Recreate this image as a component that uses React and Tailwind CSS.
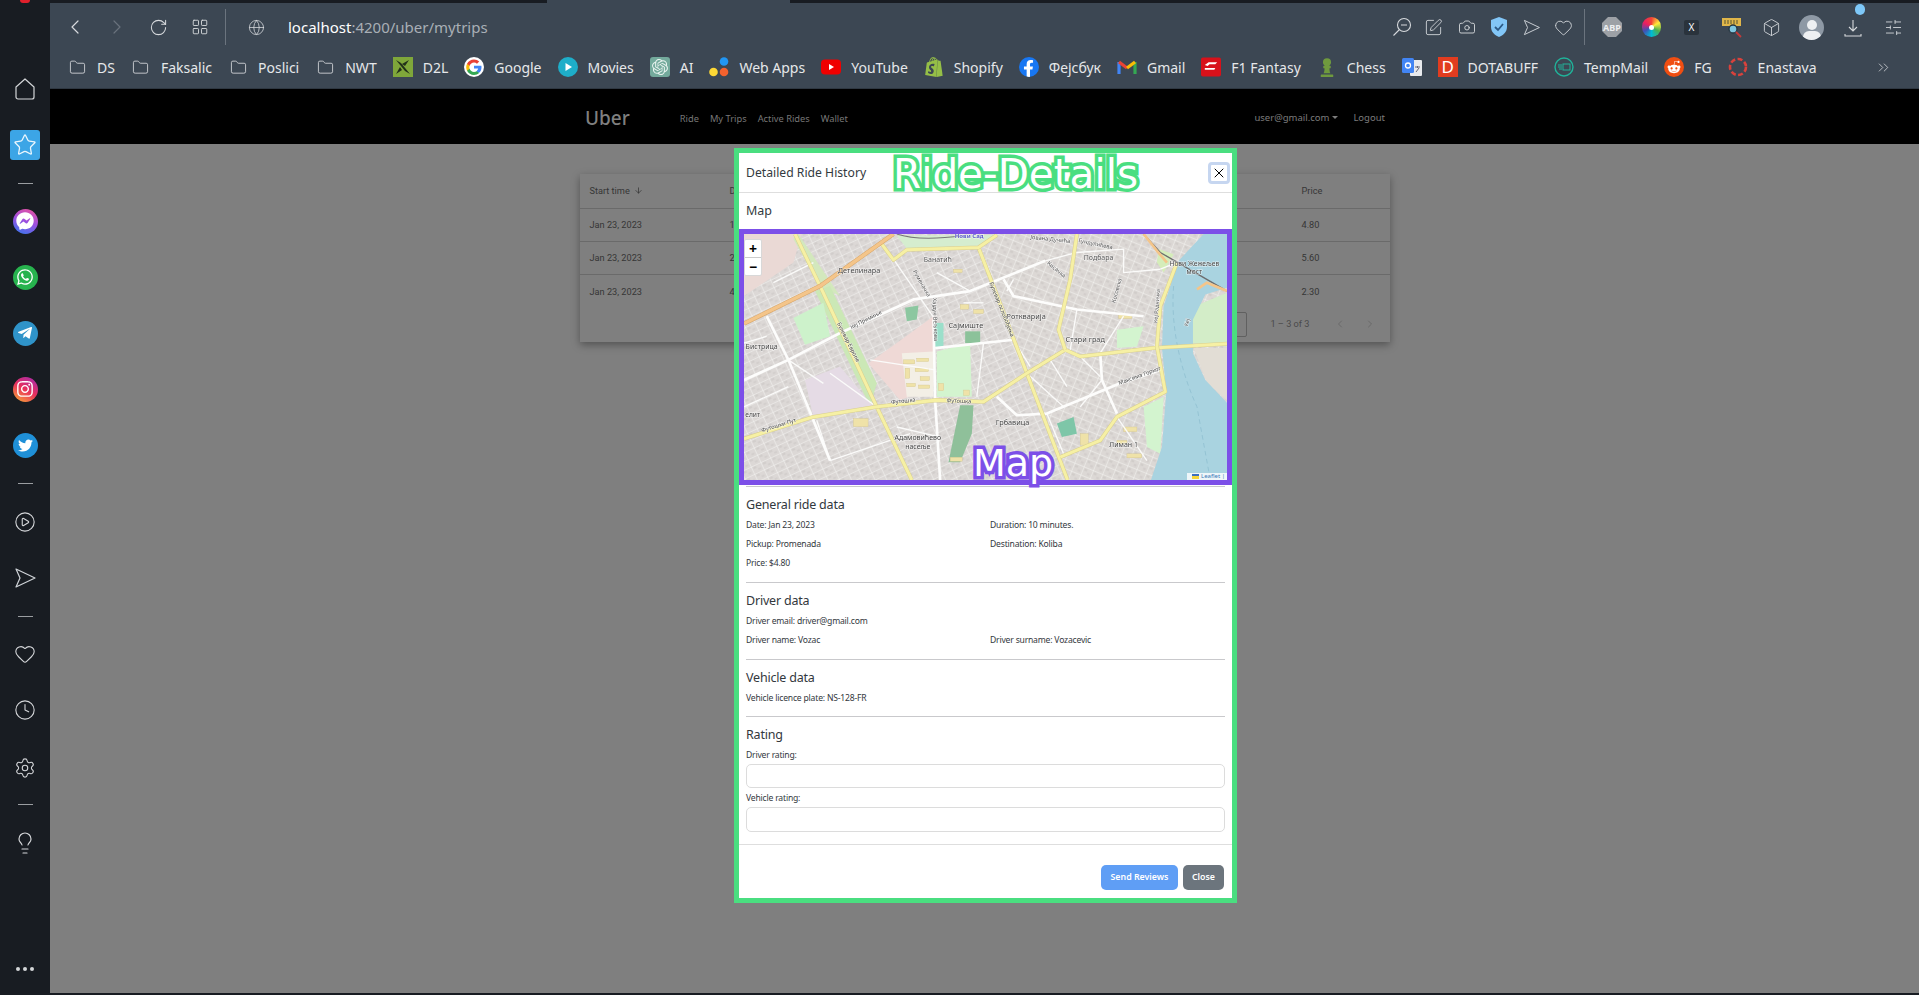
import {
  ChevronLeft, ChevronRight, RotateCw, LayoutGrid, Globe, Folder, Camera, Heart, Box,
  SlidersHorizontal, ChevronsRight, Star, CirclePlay, Clock, Settings, Lightbulb, X, ArrowDown, SquarePen,
} from "lucide-react";
import { FaWhatsapp, FaTelegramPlane, FaTwitter, FaFacebookF, FaFacebookMessenger, FaInstagram, FaChessPawn, FaRedditAlien } from "react-icons/fa";
import { SiOpenai, SiShopify } from "react-icons/si";

const SendIcon = ({ size = 20 }) => (
  <svg width={size} height={size} viewBox="0 0 24 24" fill="none" stroke="#cfd3d8" strokeWidth="1.2" strokeLinejoin="round">
    <path d="M3 3 L22 12 L3 21 L7 12 Z" />
  </svg>
);

const GoogleIcon = () => (
  <svg width="20" height="20" viewBox="0 0 48 48">
    <circle cx="24" cy="24" r="24" fill="#fff" />
    <path fill="#4285F4" d="M42 24.5c0-1.3-.1-2.5-.3-3.7H24v7h10.1c-.4 2.3-1.8 4.3-3.7 5.6v4.6h6C39.900 34.800 42 30.100 42 24.500z" />
    <path fill="#34A853" d="M24 43c5 0 9.300-1.700 12.400-4.500l-6-4.600c-1.700 1.100-3.800 1.800-6.400 1.800-4.900 0-9-3.300-10.500-7.700H7.300v4.800C10.400 38.800 16.700 43 24 43z" />
    <path fill="#FBBC05" d="M13.500 28c-.4-1.100-.6-2.400-.6-3.600s.2-2.500.6-3.600v-4.800H7.300C6 18.500 5.300 21.200 5.300 24.400s.7 5.900 2 8.400l6.200-4.800z" />
    <path fill="#EA4335" d="M24 13.100c2.800 0 5.200 1 7.200 2.800l5.300-5.300C33.300 7.600 29 5.800 24 5.800c-7.300 0-13.600 4.200-16.700 10.400l6.200 4.800c1.500-4.500 5.600-7.900 10.500-7.900z" />
  </svg>
);

const folder = <Folder size={17} strokeWidth={1.1} color="#e6e8ea" />;

const bookmarks = [
  { icon: folder, label: "DS" },
  { icon: folder, label: "Faksalic" },
  { icon: folder, label: "Poslici" },
  { icon: folder, label: "NWT" },
  {
    label: "D2L",
    icon: (
      <svg width="20" height="20" viewBox="0 0 20 20">
        <rect width="20" height="20" fill="#7fa73a" />
        <path d="M3 3 L8 6 L17 17 L12 14 Z M16 3 L12 9 L9 7 Z M3 17 L7 10 L9 13 Z" fill="#22301a" />
      </svg>
    ),
  },
  { label: "Google", icon: <GoogleIcon /> },
  {
    label: "Movies",
    icon: (
      <svg width="20" height="20" viewBox="0 0 20 20">
        <circle cx="10" cy="10" r="10" fill="#1eaec9" />
        <path d="M7.5 6 L14 10 L7.5 14 Z" fill="#fff" />
      </svg>
    ),
  },
  {
    label: "AI",
    icon: (
      <span className="w-5 h-5 rounded-[3px] bg-[#74aa9c] flex items-center justify-center">
        <SiOpenai size={16} color="#e8f3ef" />
      </span>
    ),
  },
  {
    label: "Web Apps",
    icon: (
      <svg width="20" height="20" viewBox="0 0 20 20">
        <circle cx="15" cy="4.5" r="4.3" fill="#2196f3" />
        <circle cx="4.5" cy="15" r="4.3" fill="#fdd835" />
        <circle cx="15" cy="15" r="4.3" fill="#f4622e" />
      </svg>
    ),
  },
  {
    label: "YouTube",
    icon: (
      <svg width="20" height="20" viewBox="0 0 20 20">
        <rect y="2.5" width="20" height="15" rx="4" fill="#f00000" />
        <path d="M8 7 L13 10 L8 13 Z" fill="#fff" />
      </svg>
    ),
  },
  { label: "Shopify", icon: <SiShopify size={20} color="#95bf47" /> },
  {
    label: "Фејсбук",
    icon: (
      <span className="w-5 h-5 rounded-full bg-[#1877f2] flex items-end justify-center overflow-hidden">
        <FaFacebookF size={17} color="#fff" />
      </span>
    ),
  },
  {
    label: "Gmail",
    icon: (
      <svg width="20" height="20" viewBox="0 0 20 20" fill="none" strokeWidth="3.2">
        <path d="M2 17 V5" stroke="#4285f4" />
        <path d="M18 17 V5" stroke="#34a853" />
        <path d="M2 5 L10 11" stroke="#ea4335" />
        <path d="M10 11 L18 5" stroke="#fbbc05" />
      </svg>
    ),
  },
  {
    label: "F1 Fantasy",
    icon: (
      <svg width="21" height="20" viewBox="0 0 21 20">
        <rect width="21" height="20" rx="2" fill="#d8111a" />
        <path d="M4 8 L8 5 H17 L15 7 H9 L7 9 Z M4 11 H15 L14 13 H4 Z" fill="#fff" />
      </svg>
    ),
  },
  { label: "Chess", icon: <FaChessPawn size={20} color="#6f9a3e" /> },
  {
    label: "",
    icon: (
      <svg width="20" height="20" viewBox="0 0 20 20">
        <rect x="8" y="3" width="12" height="16" rx="1" fill="#e8eaed" />
        <rect y="1" width="12" height="15" rx="1.5" fill="#4285f4" />
        <circle cx="6" cy="8.5" r="2.5" fill="none" stroke="#fff" strokeWidth="1.3" />
        <path d="M13 10 H18 M15.5 9 V11 M14 15 L17 11" stroke="#667" strokeWidth="1" />
      </svg>
    ),
  },
  {
    label: "DOTABUFF",
    icon: <span className="w-5 h-5 bg-[#e23c1f] text-white text-[17px] leading-5 text-center">D</span>,
  },
  {
    label: "TempMail",
    icon: (
      <svg width="20" height="20" viewBox="0 0 20 20" fill="none" stroke="#20b39a" strokeWidth="1.4">
        <circle cx="10" cy="10" r="9" />
        <rect x="9" y="7" width="7" height="6" strokeWidth="1" />
        <path d="M4 8 H8 M4 10 H8 M5 12 H8" strokeWidth="1" />
      </svg>
    ),
  },
  {
    label: "FG",
    icon: (
      <span className="w-5 h-5 rounded-full bg-[#f04e12] flex items-center justify-center">
        <FaRedditAlien size={14} color="#fff" />
      </span>
    ),
  },
  {
    label: "Enastava",
    icon: (
      <svg width="20" height="20" viewBox="0 0 20 20" fill="none">
        <circle cx="10" cy="10" r="8" stroke="#d9423c" strokeWidth="2.6" strokeDasharray="5 2.4" />
      </svg>
    ),
  },
];

const SideSep = ({ h }) => (
  <div className={`w-full flex items-center justify-center ${h}`}>
    <div className="w-[15px] h-px bg-[#9a9da1]" />
  </div>
);

const SideCell = ({ children }) => <div className="h-14 w-full flex items-center justify-center shrink-0">{children}</div>;

const Round = ({ cls, children }) => <span className={`w-[25px] h-[25px] rounded-full flex items-center justify-center ${cls}`}>{children}</span>;

function Sidebar() {
  const c = "#d4d6d9";
  return (
    <aside className="w-[50px] shrink-0 bg-[#181c22] flex flex-col items-center pt-[61px] relative">
      <div className="absolute top-0 left-[20px] w-[10px] h-[3px] rounded-b-full bg-[#e0202c]" />
      <SideCell>
        <svg width="22" height="24" viewBox="0 0 22 24" fill="none" stroke={c} strokeWidth="1.2" strokeLinejoin="round">
          <path d="M11 2 L20 10 V20 A2 2 0 0 1 18 22 H4 A2 2 0 0 1 2 20 V10 Z" />
        </svg>
      </SideCell>
      <SideCell>
        <span className="w-[30px] h-[30px] rounded-[3px] bg-[#3ca5e6] flex items-center justify-center">
          <Star size={24} strokeWidth={1.3} color="#eaf6fd" />
        </span>
      </SideCell>
      <SideSep h="h-5" />
      <SideCell><Round cls="bg-[linear-gradient(200deg,#f0529a,#9a4fe0_50%,#2f7bf0)]"><FaFacebookMessenger size={18} color="#fff" /></Round></SideCell>
      <SideCell><Round cls="bg-[#27b34e]"><FaWhatsapp size={18} color="#fff" /></Round></SideCell>
      <SideCell><Round cls="bg-[#2f93c9]"><FaTelegramPlane size={16} color="#fff" /></Round></SideCell>
      <SideCell><Round cls="bg-[linear-gradient(30deg,#f9b233,#e8305c_50%,#a12bb5)]"><FaInstagram size={18} color="#fff" /></Round></SideCell>
      <SideCell><Round cls="bg-[#1f90d8]"><FaTwitter size={15} color="#fff" /></Round></SideCell>
      <SideSep h="h-[21px]" />
      <SideCell><CirclePlay size={22} strokeWidth={1.2} color={c} /></SideCell>
      <SideCell><SendIcon size={24} /></SideCell>
      <SideSep h="h-5" />
      <SideCell><Heart size={22} strokeWidth={1.2} color={c} /></SideCell>
      <SideCell><Clock size={22} strokeWidth={1.2} color={c} /></SideCell>
      <SideCell><Settings size={22} strokeWidth={1.2} color={c} className="mt-[3px]" /></SideCell>
      <SideSep h="h-[21px]" />
      <SideCell><Lightbulb size={24} strokeWidth={1.2} color={c} /></SideCell>
      <div className="mt-auto mb-[24px] flex gap-[3px]">
        <span className="w-1 h-1 rounded-full bg-[#d4d6d9]" />
        <span className="w-1 h-1 rounded-full bg-[#d4d6d9]" />
        <span className="w-1 h-1 rounded-full bg-[#d4d6d9]" />
      </div>
    </aside>
  );
}

function Toolbar() {
  const c = "#d7dadd";
  return (
    <>
      <div className="h-[3px] bg-[#181c22] flex">
        <div className="ml-[497px] w-[243px] bg-[#3c4753]" />
      </div>
      <div className="h-[48px] bg-[#3c4753] flex items-center pl-[13px]">
        <ChevronLeft size={24} strokeWidth={1.2} color={c} />
        <ChevronRight size={24} strokeWidth={1.2} color="#69727c" className="ml-[18px]" />
        <RotateCw size={19} strokeWidth={1.3} color={c} className="ml-[20px]" />
        <LayoutGrid size={18} strokeWidth={1.2} color={c} className="ml-[23px]" />
        <div className="ml-[16px] w-px h-[36px] bg-[#6b747e]" />
        <Globe size={17} strokeWidth={1.1} color={c} className="ml-[22px]" />
        <div className="ml-[23px] text-[15px] text-[#a9afb6]">
          <span className="text-white">localhost</span>:4200/uber/mytrips
        </div>
        <div className="ml-auto flex items-center">
          <svg width="20" height="20" viewBox="0 0 20 20" fill="none" stroke={c} strokeWidth="1.1">
            <circle cx="12" cy="8" r="6.5" />
            <path d="M7.5 12.5 L1.5 18.5 M9 8 H15" />
          </svg>
          <SquarePen size={19} strokeWidth={1.1} color={c} className="ml-[12px]" />
          <Camera size={18} strokeWidth={1.2} color={c} className="ml-[15px]" />
          <svg width="18" height="20" viewBox="0 0 18 20" className="ml-[14px]">
            <path d="M9 0 L17 3 V10 C17 15 13 18.5 9 20 C5 18.5 1 15 1 10 V3 Z" fill="#82c6f7" />
            <path d="M5 10 L8 13 L13 7" fill="none" stroke="#2c5a86" strokeWidth="1.8" />
          </svg>
          <span className="ml-[14px]"><SendIcon size={19} /></span>
          <Heart size={19} strokeWidth={1.1} color={c} className="ml-[13px]" />
          <div className="ml-[11px] w-px h-[36px] bg-[#6b747e]" />
          <svg width="20" height="20" viewBox="0 0 20 20" className="ml-[17px]">
            <path d="M6 0 H14 L20 6 V14 L14 20 H6 L0 14 V6 Z" fill="#9da1a6" />
            <text x="10" y="13.5" textAnchor="middle" fontSize="9" fontWeight="700" fill="#eceef0">ABP</text>
          </svg>
          <span className="ml-[20px] w-[19px] h-5 rounded-full bg-[conic-gradient(#f44336,#ffeb3b,#4caf50,#00bcd4,#3f51b5,#e91e63,#f44336)] flex items-center justify-center">
            <span className="w-[5px] h-[5px] rounded-full bg-white" />
          </span>
          <span className="ml-[23px] w-[15px] h-[15px] rounded-[2px] bg-[#2a333c] text-[10px] leading-[15px] text-white text-center">X</span>
          <svg width="21" height="21" viewBox="0 0 21 21" className="ml-[23px]">
            <rect x="0" y="1" width="19" height="8" fill="#e0b64a" />
            <path d="M2 4 H17 M2 6 H17" stroke="#553" strokeWidth="1" strokeDasharray="2 1" />
            <circle cx="11" cy="12" r="4" fill="#7dc6e0" stroke="#25343f" strokeWidth="1.3" />
            <path d="M14 15 L19 20" stroke="#c23a3a" strokeWidth="1.8" />
          </svg>
          <Box size={19} strokeWidth={1.1} color={c} className="ml-[19px]" />
          <span className="ml-[18px] w-[25px] h-[25px] rounded-full bg-[#8e99a5] overflow-hidden relative flex justify-center">
            <span className="absolute top-[5px] w-[10px] h-[10px] rounded-full bg-[#eef0f2]" />
            <span className="absolute top-[16px] w-[18px] h-[12px] rounded-full bg-[#eef0f2]" />
          </span>
          <span className="ml-[20px] relative">
            <svg width="18" height="20" viewBox="0 0 18 20" fill="none" stroke={c} strokeWidth="1.1" className="mt-[2px]">
              <path d="M9 2 V13 M5 9 L9 13 L13 9 M1 16 V18 H17 V16" />
            </svg>
            <span className="absolute top-[-12px] left-[11px] w-[10px] h-[11px] rounded-full bg-[#7ec8f8]" />
          </span>
          <SlidersHorizontal size={19} strokeWidth={1.1} color={c} className="ml-[22px] mr-[16px]" />
        </div>
      </div>
      <div className="h-[38px] bg-[#3c4753] border-b border-[#2f3842] flex items-center pl-[17px] pb-[5px] text-[14px] text-[#e6e8ea] relative">
        <div className="flex items-center gap-[16px]">
          {bookmarks.map((b, i) => (
            <div key={i} className="flex items-center gap-[10px]">
              <span className="w-5 h-5 flex items-center justify-center">{b.icon}</span>
              {b.label && <span className="whitespace-nowrap">{b.label}</span>}
            </div>
          ))}
        </div>
        <ChevronsRight size={17} strokeWidth={1.1} color={c} className="absolute right-[27px] top-[8px]" />
      </div>
    </>
  );
}

function Navbar() {
  return (
    <nav className="h-[55px] bg-black flex items-center pt-[4px] text-[9.5px] text-[#7c7c7c] shrink-0">
      <span className="ml-[535px] text-[19px] font-medium text-[#7f7f7f]">Uber</span>
      <div className="ml-[50px] flex gap-[11px] text-[#777] text-[9.3px]">
        <span>Ride</span>
        <span>My Trips</span>
        <span>Active Rides</span>
        <span>Wallet</span>
      </div>
      <span className="ml-auto">user@gmail.com</span>
      <span className="ml-[3px] mb-[2px] w-0 h-0 border-x-[3px] border-x-transparent border-t-[3px] border-t-[#7c7c7c]" />
      <span className="ml-[15px] mr-[534px]">Logout</span>
    </nav>
  );
}

const rows = [
  ["Jan 23, 2023", "10", "4.80"],
  ["Jan 23, 2023", "20", "5.60"],
  ["Jan 23, 2023", "40", "2.30"],
];

function TripsTable() {
  return (
    <div className="mt-[30px] mx-auto w-[810px] h-[168px] bg-[#7f7f7f] shadow-[0_3px_8px_rgba(0,0,0,0.35)] font-['Roboto',sans-serif] text-[9.2px] text-[#363636]">
      <div className="h-[35px] grid grid-cols-[140px_572px_1fr] items-center pl-[10px] border-b border-[#6a6a6a]">
        <span className="flex items-center gap-[4px]">Start time <ArrowDown size={9} strokeWidth={2} /></span>
        <span>Duration</span>
        <span>Price</span>
      </div>
      {rows.map((r, i) => (
        <div key={i} className={`h-[33px] grid grid-cols-[140px_572px_1fr] items-center pl-[10px] ${i < 2 ? "border-b border-[#6a6a6a]" : ""}`}>
          <span>{r[0]}</span>
          <span>{r[1]}</span>
          <span>{r[2]}</span>
        </div>
      ))}
      <div className="flex items-center justify-end mt-[3px] h-[26px]">
        <span className="w-[40px] h-[25px] border border-[#606060] rounded-[2px]" />
        <span className="ml-[23px] text-[#4a4a4a]">1 – 3 of 3</span>
        <ChevronLeft size={12} color="#6a6a6a" className="ml-[24px]" />
        <ChevronRight size={12} color="#6a6a6a" className="ml-[18px] mr-[14px]" />
      </div>
    </div>
  );
}

const yellowRoads = [
  "M195 45 L270 200 L440 560 L545 778",
  "M745 85 L890 460 L1012 778",
  "M455 75 L490 122 L530 92 L745 85 L800 48",
  "M42 655 L250 590 L440 560 L620 540 L760 545 L890 460 L1005 390 L1050 410 L1270 385 L1490 372",
  "M1040 45 L1020 180 L985 330 L1005 390",
  "M1340 130 L1290 260 L1280 380 L1305 515 L1160 590 L1110 660 L990 710",
];

const whiteRoads = [
  "M42 480 L175 420 L330 340 L550 240 L720 215 L945 125",
  "M110 290 L175 420 L300 720",
  "M610 300 L615 540 L630 778",
  "M615 385 L850 360",
  "M820 180 L850 230 L1040 270 L1240 290",
  "M800 530 L860 585 L950 580 L1170 490 L1290 450",
  "M1110 400 L1115 480 L1160 580",
];

const thinRoads = [
  "M945 125 L1040 100 L1180 90 L1180 160 L1290 150",
  "M830 215 L850 180",
  "M260 600 L300 720",
  "M1115 480 L1050 560",
  "M890 460 L1000 560",
  "M700 250 L760 250",
  "M760 370 L740 530",
  "M615 450 L420 420",
  "M42 370 L110 350",
  "M175 420 L280 490",
  "M300 720 L540 640",
  "M1050 410 L1110 470",
  "M630 650 L500 620",
  "M950 580 L1000 700",
  "M1160 590 L1250 720",
  "M1290 150 L1340 130",
  "M1180 290 L1110 400",
  "M960 420 L1010 500",
  "M850 360 L900 440",
  "M490 120 L615 300",
  "M620 160 L720 215",
  "M440 560 L300 460",
  "M42 560 L175 500",
  "M1040 270 L1020 390",
  "M130 190 L250 130",
];

const campus = [
  [520, 420, 34, 12], [560, 415, 36, 10], [525, 445, 14, 30], [555, 445, 40, 10], [570, 470, 28, 12],
  [530, 490, 26, 10], [565, 495, 34, 10], [625, 490, 16, 22], [700, 510, 18, 16], [690, 255, 26, 14],
  [730, 270, 30, 12], [670, 150, 26, 10], [1165, 285, 40, 12], [1180, 620, 40, 14], [1160, 660, 30, 10],
  [1190, 700, 44, 12], [370, 595, 44, 24], [660, 710, 36, 12], [1050, 640, 24, 34],
];

const labels = [
  [717, 58, "Нови Сад", "#5a5ac8", 18, 0, 700],
  [623, 127, "Банатић", "#555", 21, 0],
  [387, 161, "Детелинара", "#444", 22, 0],
  [1105, 123, "Подбара", "#555", 21, 0],
  [1392, 139, "Нови Жежељев", "#444", 20, 0],
  [1392, 164, "мост", "#444", 20, 0],
  [888, 297, "Роткварија", "#444", 22, 0],
  [707, 326, "Сајмиште", "#444", 22, 0],
  [1065, 366, "Стари град", "#444", 22, 0],
  [95, 389, "Бистрица", "#444", 21, 0],
  [847, 614, "Грбавица", "#444", 22, 0],
  [563, 660, "Адамовићево", "#444", 21, 0],
  [563, 687, "насеље", "#444", 21, 0],
  [1180, 681, "Лиман 1", "#444", 21, 0],
  [68, 589, "елит", "#444", 20, 0],
  [350, 370, "Булевар Европе", "#444", 17, 63],
  [410, 305, "Кеј Примиње", "#444", 16, -27],
  [520, 548, "Футошка", "#444", 17, -6],
  [686, 548, "Футошка", "#444", 17, 3],
  [148, 620, "Футошки Пут", "#444", 17, -17],
  [810, 272, "Булевар ослобођења", "#444", 17, 68],
  [570, 195, "Руменачка", "#555", 17, 60],
  [610, 300, "Хајдук Вељкова", "#555", 17, 88],
  [1230, 472, "Максима Горког", "#444", 17, -20],
  [960, 66, "Јована Дучића", "#555", 17, 6],
  [1095, 80, "Гундулићева", "#555", 17, 12],
  [975, 155, "Кисачка", "#555", 17, 40],
  [1165, 215, "Косовска", "#555", 17, -75],
  [1285, 260, "Кеј Радничка", "#555", 16, -85],
  [1375, 310, "Кеј", "#555", 16, -75],
];

function CityMap() {
  return (
    <svg viewBox="42 45 1448 733" preserveAspectRatio="none" className="w-full h-full block blur-[0.3px]">
      <defs>
        <pattern id="gridA" width="32" height="24" patternUnits="userSpaceOnUse" patternTransform="rotate(-25)">
          <rect width="32" height="24" fill="#dcd8d6" />
          <rect x="5" y="4" width="10" height="6" fill="#d1cdcb" />
          <rect x="18" y="13" width="9" height="6" fill="#d3cfcd" />
          <path d="M0 0 H32 M0 0 V24" stroke="#f9f8f6" strokeWidth="2.4" />
        </pattern>
        <pattern id="gridB" width="30" height="26" patternUnits="userSpaceOnUse" patternTransform="rotate(22)">
          <rect width="30" height="26" fill="#dcd8d5" />
          <rect x="5" y="5" width="9" height="7" fill="#d1cdca" />
          <rect x="17" y="14" width="8" height="7" fill="#d3cecc" />
          <path d="M0 0 H30 M0 0 V26" stroke="#f9f8f6" strokeWidth="2.4" />
        </pattern>
      </defs>
      <rect x="42" y="45" width="1448" height="733" fill="url(#gridA)" />
      <polygon points="745,45 1490,45 1490,778 1012,778 890,460" fill="url(#gridB)" />
      <g stroke="none">
        <polygon points="42,230 190,130 215,45 42,45" fill="#ead9d5" />
        <polygon points="190,60 205,45 330,230 270,200" fill="#d3e8bd" />
        <polygon points="255,215 300,200 440,490 420,560" fill="#cbe8b6" />
        <polygon points="190,295 280,250 300,350 225,375" fill="#cdf2cb" />
        <polygon points="225,480 330,440 430,560 250,590" fill="#e5dbe5" />
        <polygon points="415,430 500,370 610,290 610,500 510,540" fill="#efd9d6" />
        <polygon points="515,400 610,395 610,530 530,530" fill="#f3efe6" />
        <polygon points="620,395 720,370 725,530 620,530" fill="#d3f4cf" />
        <polygon points="615,310 640,310 640,385 615,385" fill="#9bdfca" />
        <polygon points="705,335 750,335 750,370 705,370" fill="#8cc29a" />
        <polygon points="690,555 730,555 725,640 690,725 655,725" fill="#8fc09a" />
        <polygon points="525,265 565,258 560,300 530,305" fill="#8cc7a0" />
        <polygon points="500,50 800,48 745,80 530,88" fill="#d5edcf" />
        <polygon points="1160,330 1240,320 1220,380 1160,385" fill="#d3f4cf" />
        <polygon points="1240,560 1300,530 1290,700 1250,680" fill="#d3f4cf" />
        <polygon points="980,610 1030,590 1040,640 995,650" fill="#7ec6a8" />
        <polygon points="1285,90 1330,105 1300,160 1280,130" fill="#d5edba" />
        <polygon points="1370,270 1490,220 1490,380 1380,370" fill="#d3edc8" />
        <polygon points="1390,385 1490,385 1490,540 1430,490" fill="#e2ddd5" />
      </g>
      {campus.map(([x, y, w, h]) => (
        <rect key={x + "-" + y} x={x} y={y} width={w} height={h} fill="#efe2a8" stroke="#cfc08a" strokeWidth="1" />
      ))}
      <path d="M1490 45 H1420 L1345 125 L1300 260 L1295 385 L1308 515 L1295 680 L1262 778 H1490 V548 L1425 480 L1388 400 L1388 300 L1425 225 L1490 205 Z" fill="#a9d3e0" />
      <path d="M1330 200 C1320 320 1350 450 1400 560 L1440 778" fill="none" stroke="#7fb2c6" strokeWidth="1.5" strokeDasharray="14 10" />
      <path d="M1240 45 L1290 100 L1490 215" fill="none" stroke="#6d6d6d" strokeWidth="4" />
      <path d="M500 45 C550 62 620 60 700 50" fill="none" stroke="#777" strokeWidth="3" />
      {thinRoads.map((d) => (
        <path key={d} d={d} fill="none" stroke="#fbfbfa" strokeWidth="4" strokeLinejoin="round" />
      ))}
      {whiteRoads.map((d) => (
        <path key={d} d={d} fill="none" stroke="#fdfdfc" strokeWidth="8" strokeLinejoin="round" />
      ))}
      {yellowRoads.map((d) => (
        <g key={d} fill="none" strokeLinejoin="round">
          <path d={d} stroke="#d9cf8f" strokeWidth="12" />
          <path d={d} stroke="#f6f0a4" strokeWidth="9" />
        </g>
      ))}
      <g fill="none" strokeLinejoin="round">
        <path d="M42 312 L270 200 L490 45" stroke="#d9a76a" strokeWidth="13" />
        <path d="M42 312 L270 200 L490 45" stroke="#f4c58a" strokeWidth="10" />
        <path d="M1240 45 L1280 95 L1310 130 M1490 215 L1430 190 L1400 210" stroke="#f4c58a" strokeWidth="8" />
      </g>
      {labels.map(([x, y, t, fill, size, rot, weight]) => (
        <text
          key={t + x}
          x={x}
          y={y}
          fill={fill}
          fontSize={size}
          fontWeight={weight || 400}
          textAnchor="middle"
          stroke="#fff"
          strokeOpacity="0.7"
          strokeWidth="3"
          paintOrder="stroke"
          transform={rot ? `rotate(${rot} ${x} ${y})` : undefined}
        >
          {t}
        </text>
      ))}
    </svg>
  );
}

const Hr = () => <div className="h-px bg-[#c9c9cc]" />;

function Modal() {
  const heading = "text-[12.5px] tracking-[-0.2px] leading-[18px]";
  const body = "text-[8.6px] tracking-[-0.2px]";
  return (
    <div className="absolute left-[734px] top-[148px] w-[503px] h-[755px] border-[5px] border-[#4ade80] bg-white text-[#333a40] flex flex-col">
      <div className="h-[40px] shrink-0 border-b border-[#dedede] flex items-center justify-between pl-[7px] pr-[2px]">
        <span className="text-[12.2px] pt-[2px]">Detailed Ride History</span>
        <button className="w-[22px] h-[22px] rounded-[4px] border-[3px] border-[#c6d6f0] flex items-center justify-center">
          <X size={16} strokeWidth={1.5} color="#000" />
        </button>
      </div>
      <div className="h-[36px] shrink-0 flex items-center pl-[7px] text-[12.5px]">Map</div>
      <div className="h-[256px] shrink-0 border-[5px] border-[#7c4fe8] relative overflow-hidden">
        <CityMap />
        <div className="absolute left-0 top-[5px] w-[18px] h-[37px] bg-white rounded-[2px] border border-[#d8d8d8] text-black flex flex-col items-center text-[14px] leading-[18px] font-bold">
          <span className="h-[18px] border-b border-[#ccc] w-full text-center">+</span>
          <span className="h-[18px]">−</span>
        </div>
        <div className="absolute right-0 bottom-0 h-[7px] pl-[5px] pr-[2px] bg-white/80 flex items-center gap-[2px] text-[6px] text-[#3a7ab8]">
          <span className="w-[7px] h-[5px] bg-[linear-gradient(#3b6fc0_50%,#f5d63c_50%)]" />
          Leaflet |
        </div>
      </div>
      <div className="px-[7px] pt-px text-[#33383d]">
        <Hr />
        <h5 className={`pt-[9px] h-[26px] ${heading}`}>General ride data</h5>
        <div className={`mt-[3px] grid grid-cols-[244px_1fr] leading-[19px] pb-[9px] ${body}`}>
          <span>Date: Jan 23, 2023</span>
          <span>Duration: 10 minutes.</span>
          <span>Pickup: Promenada</span>
          <span>Destination: Koliba</span>
          <span>Price: $4.80</span>
        </div>
        <Hr />
        <h5 className={`pt-[9px] h-[26px] ${heading}`}>Driver data</h5>
        <div className={`mt-[3px] grid grid-cols-[244px_1fr] leading-[19px] pb-[9px] ${body}`}>
          <span className="col-span-2">Driver email: driver@gmail.com</span>
          <span>Driver name: Vozac</span>
          <span>Driver surname: Vozacevic</span>
        </div>
        <Hr />
        <h5 className={`pt-[9px] h-[26px] ${heading}`}>Vehicle data</h5>
        <div className={`mt-[3px] leading-[19px] pb-[8px] ${body}`}>Vehicle licence plate: NS-128-FR</div>
        <Hr />
        <h5 className={`pt-[9px] h-[27px] ${heading}`}>Rating</h5>
        <div className={`mt-[3px] leading-[17px] h-[17px] ${body}`}>Driver rating:</div>
        <div className="h-[24px] rounded-[5px] border border-[#dcdcdc]" />
        <div className={`mt-[2px] leading-[17px] h-[17px] ${body}`}>Vehicle rating:</div>
        <div className="h-[25px] rounded-[5px] border border-[#dcdcdc]" />
      </div>
      <div className="mt-[12px] border-t border-[#dedede] pt-[20px] pr-[8px] flex justify-end gap-[5px] text-[8.8px] font-semibold text-white">
        <button className="h-[25px] w-[77px] rounded-[5px] bg-[#5f9ef5]">Send Reviews</button>
        <button className="h-[25px] w-[41px] rounded-[5px] bg-[#6c757d]">Close</button>
      </div>
    </div>
  );
}

export default function App() {
  return (
    <div className="w-[1919px] h-[995px] relative overflow-hidden flex bg-[#7f7f7f] font-['Noto_Sans',sans-serif]">
      <Sidebar />
      <main className="flex-1 flex flex-col min-w-0">
        <Toolbar />
        <Navbar />
        <TripsTable />
        <div className="mt-auto h-[2px] bg-[#181c22]" />
      </main>
      <Modal />
      <div className="absolute left-[893px] top-[151px] text-[40.5px] leading-[46px] font-['DejaVu_Sans',sans-serif] text-white [-webkit-text-stroke:7px_#4ade80] [paint-order:stroke_fill]">
        Ride-Details
      </div>
      <div className="absolute left-[973px] top-[440px] text-[38px] leading-[46px] font-['DejaVu_Sans',sans-serif] text-white [-webkit-text-stroke:7px_#7c4fe8] [paint-order:stroke_fill]">
        Map
      </div>
    </div>
  );
}
